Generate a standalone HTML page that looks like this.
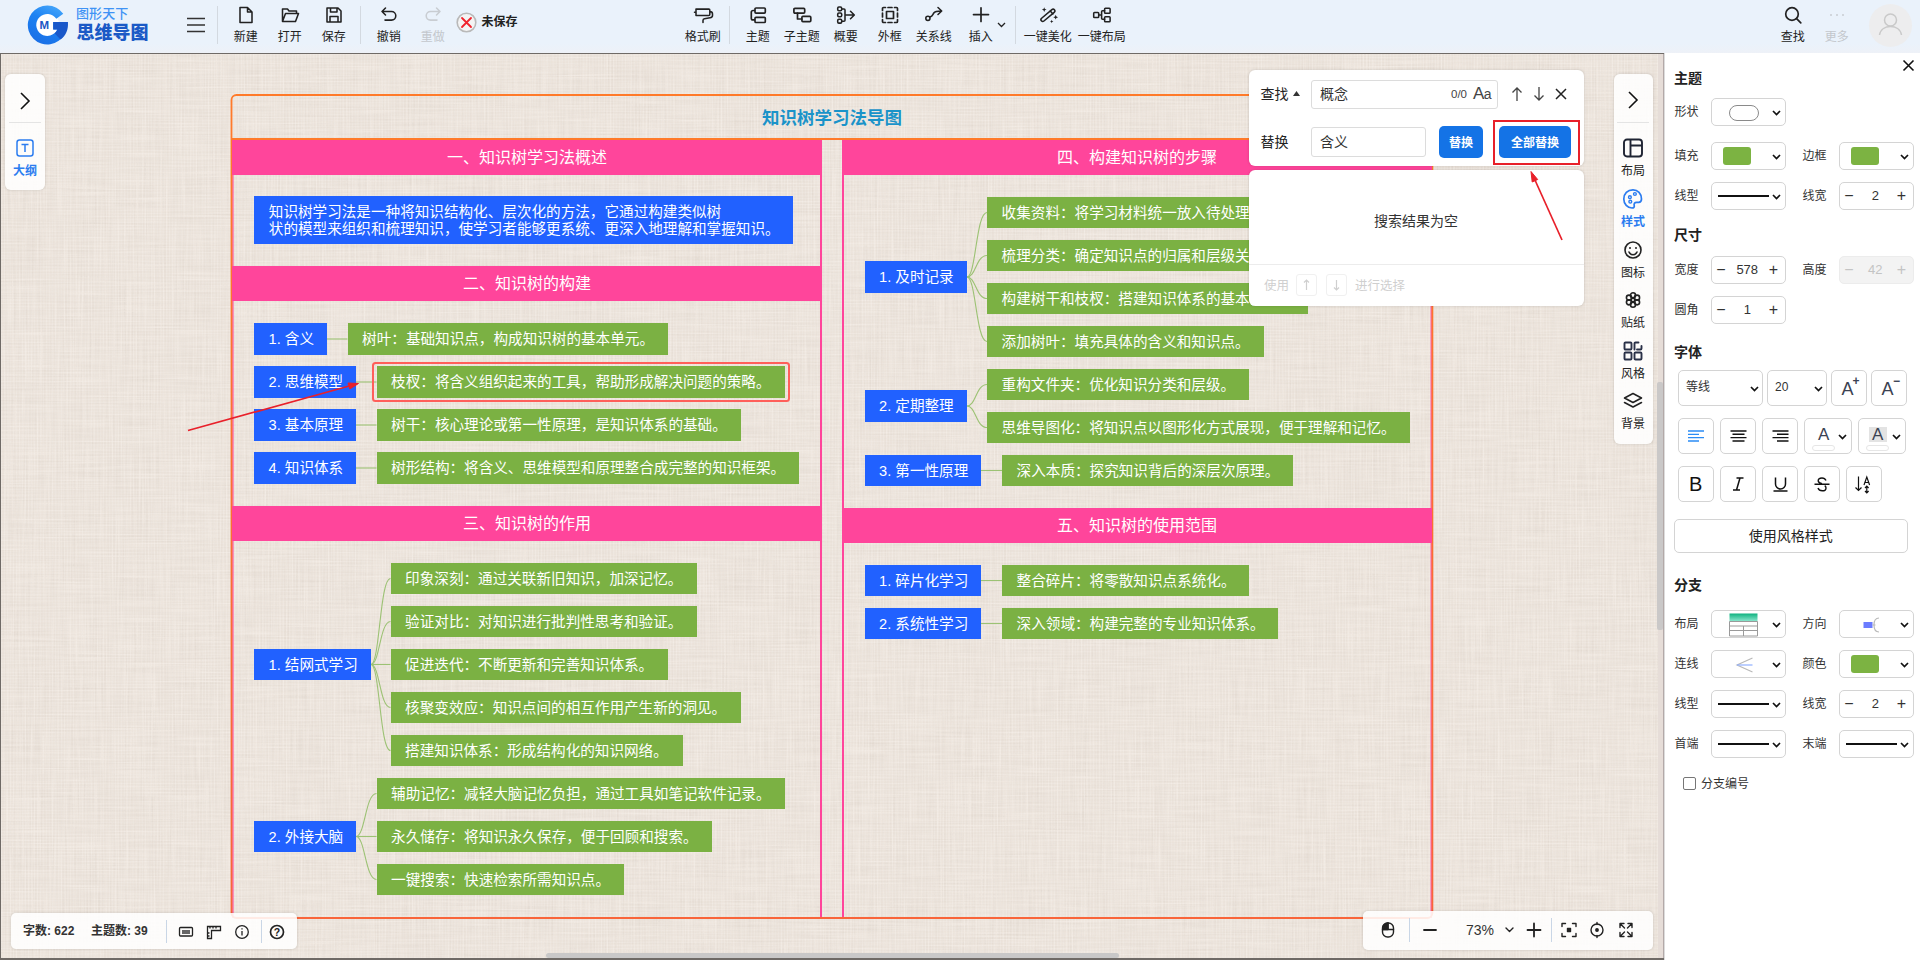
<!DOCTYPE html>
<html lang="zh-CN"><head><meta charset="utf-8"><title>思维导图</title>
<style>
*{box-sizing:border-box;margin:0;padding:0}
html,body{width:1920px;height:960px;overflow:hidden}
body{position:relative;background:#eaf2fb;font-family:"Liberation Sans","Noto Sans CJK SC",sans-serif;color:#222;font-size:12px}
.a{position:absolute}
svg{position:absolute;overflow:visible}
#canvas{position:absolute;left:0;top:53px;width:1664px;height:907px;background-color:#efe7df;border-top:1px solid #6f6a66;border-left:1px solid #6f6a66;border-bottom:2px solid #6f6a66;
background-image:repeating-linear-gradient(0deg,rgba(255,255,255,.10) 0 1px,rgba(0,0,0,0) 1px 3px),repeating-linear-gradient(90deg,rgba(255,255,255,.12) 0 1px,rgba(0,0,0,0) 1px 3px)}
.ti{position:absolute;top:0;height:53px;width:60px;margin-left:-29.200px;text-align:center}
.ti span{position:absolute;left:0;right:0;top:29.300px;font-size:12px;line-height:16px;color:#222;white-space:nowrap}
.ti.dis span{color:#c3c7cc}
.ti svg{left:21px;top:6px;width:18px;height:18px}
.vd{position:absolute;top:6px;height:38px;width:1px;background:#d3d9e0}
.n{position:absolute;height:31.500px;line-height:33px;color:#fff;font-size:14.600px;white-space:nowrap;text-align:left;padding-left:14.600px;font-weight:400;overflow:hidden}
.b{background:#2161ff}
.g{background:#7bb143}
.ph{position:absolute;height:35px;line-height:34px;background:#ff459b;color:#fff;font-size:16px;text-align:center;white-space:nowrap}
.card{position:absolute;background:rgba(255,255,255,.87);border-radius:6px;box-shadow:0 0 3px rgba(0,0,0,.16)}
.sl{position:absolute;font-size:12px;line-height:16px;white-space:nowrap;color:#222;text-align:center;width:40px;margin-left:-20px}
#rp{position:absolute;left:1664px;top:53px;width:256px;height:907px;background:#fff}
.h{position:absolute;left:1674px;font-size:14px;font-weight:700;color:#222;line-height:18px}
.lb{position:absolute;font-size:12px;color:#333;line-height:16px;white-space:nowrap}
.bx{position:absolute;border:1px solid #d4d4d4;border-radius:5px;background:#fff}
.bx.dis{background:#f3f3f3;border-color:#ececec;color:#bbb}
.num{position:absolute;left:0;right:0;text-align:center;font-size:13px;color:#333;top:0;line-height:26px}
.pm{position:absolute;top:0;line-height:25px;font-size:16px;color:#333;width:14px;text-align:center}
.dis .num,.dis .pm{color:#c4c4c4}
</style></head><body>
<div class="a" id="toolbar" style="left:0;top:0;width:1920px;height:53px;background:linear-gradient(180deg,#eaf2fb 0,#eaf2fb 44px,#eef1f7 53px)"></div><svg style="left:26px;top:4px" width="44" height="44" viewBox="0 0 44 44">
<defs><linearGradient id="lg1" x1="0.800" y1="0" x2="0.300" y2="1"><stop offset="0" stop-color="#48a9fb"/><stop offset="0.450" stop-color="#1d82f2"/><stop offset="1" stop-color="#1a6fe6"/></linearGradient></defs>
<circle cx="21.300" cy="21" r="12" fill="#fff"/>
<path d="M37.270 9.820A19.500 19.500 0 1 0 40.800 21L41.800 17.900H27.200V25.500H31.300A11 11 0 1 1 30.310 14.690Z" fill="url(#lg1)"/>
<path d="M27.200 17.900H41.900C42.600 25 40 31.500 34.500 35.500L28.500 29.300C30 28.400 31 27 31.400 25.500H27.200Z" fill="#1a58c9"/>
<text x="13.600" y="25" font-family='"Liberation Sans",sans-serif' font-weight="700" font-size="11.500" fill="#1a56c4">M</text>
</svg><div class="a" style="left:76px;top:6px;font-size:13px;line-height:16px;color:#3f93f5;font-weight:500;letter-spacing:0.100px">图形天下</div><div class="a" style="left:76.500px;top:21.500px;font-size:18px;line-height:22px;color:#1b5ac6;font-weight:900">思维导图</div><svg style="left:187px;top:17px" width="18" height="16" viewBox="0 0 18 16"><path d="M0 1.5H18M0 8H18M0 14.5H18" stroke="#333" stroke-width="1.6" fill="none"/></svg><div class="vd" style="left:217px"></div><div class="vd" style="left:360px"></div><div class="vd" style="left:729px"></div><div class="vd" style="left:1014.5px"></div><div class="ti" style="left:245px"><svg viewBox="0 0 18 18"><path d="M3 1.500h7.500l4.500 4.500v10.500h-12z M10.500 1.500v4.500h4.500" fill="none" stroke="#222" stroke-width="1.55" stroke-linecap="round" stroke-linejoin="round"/></svg><span>新建</span></div><div class="ti" style="left:289px"><svg viewBox="0 0 18 18"><path d="M1.500 15.500v-12.500h5l1.500 2h7.500v2.500 M1.500 15.500l3-8h13l-3 8z" fill="none" stroke="#222" stroke-width="1.55" stroke-linecap="round" stroke-linejoin="round"/></svg><span>打开</span></div><div class="ti" style="left:333px"><svg viewBox="0 0 18 18"><path d="M2 2h11l3 3v11h-14z M5.500 2v4h6.500v-4 M5 16v-5.500h8v5.500" fill="none" stroke="#222" stroke-width="1.55" stroke-linecap="round" stroke-linejoin="round"/></svg><span>保存</span></div><div class="ti" style="left:388px"><svg viewBox="0 0 18 18"><path d="M5.500 2l-3.500 3.500 3.500 3.500 M2 5.500h9.500a4.300 4.300 0 0 1 0 8.600h-6.500" fill="none" stroke="#222" stroke-width="1.55" stroke-linecap="round" stroke-linejoin="round"/></svg><span>撤销</span></div><div class="ti dis" style="left:432px"><svg viewBox="0 0 18 18"><path d="M12.500 2l3.500 3.500-3.500 3.500 M16 5.500h-9.500a4.300 4.300 0 0 0 0 8.600h6.500" fill="none" stroke="#c9cdd2" stroke-width="1.55" stroke-linecap="round" stroke-linejoin="round"/></svg><span>重做</span></div><div class="ti" style="left:702px"><svg viewBox="0 0 18 18"><path d="M2 3.100h12.800a1 1 0 0 1 1 1v4.400a1 1 0 0 1-1 1h-12.800z M0.500 6.300h1.500 M15.800 5.500c2 0 2.700 .8 2.700 2.500v1.500c0 1.500-.8 2-2.500 2.300l-5.500 1c-1 .2-1.500 .8-1.500 1.700v2" fill="none" stroke="#222" stroke-width="1.55" stroke-linecap="round" stroke-linejoin="round"/></svg><span>格式刷</span></div><div class="ti" style="left:757px"><svg viewBox="0 0 18 18"><path d="M7 2h8.300a1 1 0 0 1 1 1v3.100a1 1 0 0 1-1 1h-8.300a1 1 0 0 1-1-1v-3.100a1 1 0 0 1 1-1z M7 11.300h8.300a1 1 0 0 1 1 1v3.200a1 1 0 0 1-1 1h-8.300a1 1 0 0 1-1-1v-3.200a1 1 0 0 1 1-1z M6 4.500h-2a1.700 1.700 0 0 0-1.700 1.700v6a1.700 1.700 0 0 0 1.700 1.700h2" fill="none" stroke="#222" stroke-width="1.700" stroke-linecap="round" stroke-linejoin="round"/></svg><span>主题</span></div><div class="ti" style="left:801px"><svg viewBox="0 0 18 18"><rect x="0.900" y="2.400" width="10.800" height="4.700" rx="1" fill="none" stroke="#222" stroke-width="1.700" stroke-linecap="round" stroke-linejoin="round"/><rect x="8.900" y="10.400" width="8.900" height="5.200" rx="1" fill="none" stroke="#222" stroke-width="1.700" stroke-linecap="round" stroke-linejoin="round"/><path d="M4.500 7.100v5.900h4.400" fill="none" stroke="#222" stroke-width="1.700" stroke-linecap="round" stroke-linejoin="round"/></svg><span>子主题</span></div><div class="ti" style="left:845px"><svg viewBox="0 0 18 18"><rect x="0.700" y="1" width="4" height="3.800" rx="1.200" fill="none" stroke="#222" stroke-width="1.55" stroke-linecap="round" stroke-linejoin="round"/><rect x="0.700" y="7" width="4" height="3.800" rx="1.200" fill="none" stroke="#222" stroke-width="1.55" stroke-linecap="round" stroke-linejoin="round"/><rect x="0.700" y="13.300" width="4" height="3.800" rx="1.200" fill="none" stroke="#222" stroke-width="1.55" stroke-linecap="round" stroke-linejoin="round"/><path d="M4.700 3h2.300a1 1 0 0 1 1 1v10.200a1 1 0 0 1-1 1h-2.300 M8 9h9 M13.500 5.200l3.800 3.800-3.800 3.800" fill="none" stroke="#222" stroke-width="1.55" stroke-linecap="round" stroke-linejoin="round"/></svg><span>概要</span></div><div class="ti" style="left:889px"><svg viewBox="0 0 18 18"><path d="M1.500 4.500v-2a1 1 0 0 1 1-1h2 M7 1.500h4 M13.500 1.500h2a1 1 0 0 1 1 1v2 M16.500 7v4 M16.500 13.500v2a1 1 0 0 1-1 1h-2 M11 16.500h-4 M4.500 16.500h-2a1 1 0 0 1-1-1v-2 M1.500 11v-4 M5.500 5.500h7v7h-7z" fill="none" stroke="#222" stroke-width="1.700" stroke-linecap="round" stroke-linejoin="round"/></svg><span>外框</span></div><div class="ti" style="left:933px"><svg viewBox="0 0 18 18"><path d="M5 11c2.500-.8 2.500-2 3.800-4 1.200-1.800 3-2 7.500-2 M13 1.500l3.700 3.500-3.700 3.500" fill="none" stroke="#222" stroke-width="1.55" stroke-linecap="round" stroke-linejoin="round"/><circle cx="2.900" cy="12.300" r="2.100" fill="none" stroke="#222" stroke-width="1.55" stroke-linecap="round" stroke-linejoin="round"/></svg><span>关系线</span></div><div class="ti" style="left:980px"><svg viewBox="0 0 18 18"><path d="M9 1.800v13.700 M1.500 8.600h15" fill="none" stroke="#222" stroke-width="1.700" stroke-linecap="round" stroke-linejoin="round"/></svg><span>插入</span></div><div class="ti" style="left:1047px"><svg viewBox="0 0 18 18"><rect x="0.400" y="7.500" width="17" height="3.600" rx="1.800" transform="rotate(-40 8.900 9.300)" fill="none" stroke="#222" stroke-width="1.55" stroke-linecap="round" stroke-linejoin="round"/><path d="M11.300 5l2.600 2.900" fill="none" stroke="#222" stroke-width="1.55" stroke-linecap="round" stroke-linejoin="round"/><path d="M5.200 1.200l.7 1.700 1.700.7-1.700.7-.7 1.700-.7-1.700-1.700-.7 1.700-.7z M16.700 8.800l.7 1.700 1.700.7-1.700.7-.7 1.700-.7-1.700-1.700-.7 1.700-.7z M12.700 13.800l.5 1.200 1.200.5-1.200.5-.5 1.200-.5-1.200-1.200-.5 1.200-.5z" fill="#222"/></svg><span>一键美化</span></div><div class="ti" style="left:1101px"><svg viewBox="0 0 18 18"><rect x="0.700" y="6.500" width="5" height="5" rx=".8" fill="none" stroke="#222" stroke-width="1.55" stroke-linecap="round" stroke-linejoin="round"/><rect x="11.600" y="2.300" width="5.500" height="5" rx=".8" fill="none" stroke="#222" stroke-width="1.55" stroke-linecap="round" stroke-linejoin="round"/><rect x="11.600" y="10.700" width="5.500" height="5" rx=".8" fill="none" stroke="#222" stroke-width="1.55" stroke-linecap="round" stroke-linejoin="round"/><path d="M5.700 9h2.900 M11.600 4.800h-2a1 1 0 0 0-1 1v6.400a1 1 0 0 0 1 1h2" fill="none" stroke="#222" stroke-width="1.55" stroke-linecap="round" stroke-linejoin="round"/></svg><span>一键布局</span></div><div class="ti" style="left:1792px"><svg viewBox="0 0 18 18"><circle cx="8" cy="8" r="6.300" fill="none" stroke="#222" stroke-width="1.700" stroke-linecap="round" stroke-linejoin="round"/><path d="M12.600 12.600l4.200 4.200" fill="none" stroke="#222" stroke-width="1.700" stroke-linecap="round" stroke-linejoin="round"/></svg><span>查找</span></div><svg style="left:996.500px;top:21.500px" width="9" height="6" viewBox="0 0 9 6"><path d="M1 1l3.5 3.5L8 1" fill="none" stroke="#222" stroke-width="1.3"/></svg><div class="ti dis" style="left:1836px"><svg viewBox="0 0 18 18"><circle cx="3" cy="9" r="1" fill="#c9cdd2"/><circle cx="9" cy="9" r="1" fill="#c9cdd2"/><circle cx="15" cy="9" r="1" fill="#c9cdd2"/></svg><span>更多</span></div><svg style="left:455.500px;top:12.200px" width="21" height="21" viewBox="0 0 21 21"><circle cx="10.500" cy="10.500" r="9.300" fill="#f4f4f4" stroke="#b9b9b9" stroke-width="1.600"/><path d="M6 6l9 9M15 6l-9 9" stroke="#f0232d" stroke-width="1.800" stroke-linecap="round"/></svg><div class="a" style="left:481.500px;top:14.300px;font-size:12px;line-height:16px;font-weight:700;color:#222">未保存</div><svg style="left:1869px;top:4px" width="43" height="43" viewBox="0 0 43 43"><circle cx="21.500" cy="21.500" r="21.500" fill="#ededee"/><circle cx="21.500" cy="16" r="6" fill="none" stroke="#c9c9c9" stroke-width="1.500"/><path d="M10.500 31c1-6 6-8.500 11-8.500s10 2.500 11 8.500" fill="none" stroke="#c9c9c9" stroke-width="1.500"/></svg><div id="canvas"></div><svg style="left:1px;top:54px" width="1662" height="904"><defs><filter id="lin" x="0" y="0" width="100%" height="100%"><feTurbulence type="fractalNoise" baseFrequency="0.018 0.55" numOctaves="2" seed="3" result="h"/><feTurbulence type="fractalNoise" baseFrequency="0.55 0.018" numOctaves="2" seed="8" result="v"/><feBlend in="h" in2="v" mode="multiply" result="m"/><feColorMatrix in="m" type="matrix" values="0 0 0 0 0.47  0 0 0 0 0.40  0 0 0 0 0.34  1.1 1.1 1.1 0 -1.05"/></filter></defs><rect width="1662" height="904" filter="url(#lin)" opacity="0.2"/></svg><div class="a" style="left:1657.500px;top:54px;width:6px;height:904px;background:#e6ddd8"></div><div class="a" style="left:1656.500px;top:382px;width:6.500px;height:248px;background:#cac8c8;border-radius:2px"></div><div class="a" style="left:1663.200px;top:54px;width:1.500px;height:904px;background:#b3a9a8"></div><div class="a" style="left:546px;top:953px;width:573px;height:5px;background:#c9c8c8;border-radius:3px"></div><svg style="left:0;top:0" width="1664" height="960" viewBox="0 0 1664 960">
<defs><linearGradient id="fg" x1="0" y1="0" x2="0" y2="1"><stop offset="0" stop-color="#ff7a2a"/><stop offset="1" stop-color="#f9653a"/></linearGradient></defs>

<path d="M821 140V918 M843 140V918" stroke="#ff459b" stroke-width="2" fill="none"/>
<path d="M232.900 140V918 M1431.200 140V918" stroke="#ff459b" stroke-width="1.200" fill="none"/>
<path d="M231 139H1433" stroke="#ff7a2a" stroke-width="2"/>
<rect x="231.500" y="95" width="1200.900" height="823" rx="5" fill="none" stroke="url(#fg)" stroke-width="1.800"/>
<path d="M327 339H347.5" stroke="#9cc274" stroke-width="1.100" fill="none"/><path d="M356 382H376.5" stroke="#9cc274" stroke-width="1.100" fill="none"/><path d="M356 425H376.5" stroke="#9cc274" stroke-width="1.100" fill="none"/><path d="M356 468H376.5" stroke="#9cc274" stroke-width="1.100" fill="none"/><path d="M371 664.5 C379.775 664.5 379.775 578.5 390.5 578.5" stroke="#9cc274" stroke-width="1.100" fill="none"/><path d="M371 664.5 C379.775 664.5 379.775 621.5 390.5 621.5" stroke="#9cc274" stroke-width="1.100" fill="none"/><path d="M371 664.5H390.5" stroke="#9cc274" stroke-width="1.100" fill="none"/><path d="M371 664.5 C379.775 664.5 379.775 707.5 390.5 707.5" stroke="#9cc274" stroke-width="1.100" fill="none"/><path d="M371 664.5 C379.775 664.5 379.775 750.5 390.5 750.5" stroke="#9cc274" stroke-width="1.100" fill="none"/><path d="M356 836.5 C365.225 836.5 365.225 793.5 376.5 793.5" stroke="#9cc274" stroke-width="1.100" fill="none"/><path d="M356 836.5H376.5" stroke="#9cc274" stroke-width="1.100" fill="none"/><path d="M356 836.5 C365.225 836.5 365.225 879.5 376.5 879.5" stroke="#9cc274" stroke-width="1.100" fill="none"/><path d="M967 277 C976 277 976 212.5 987 212.5" stroke="#9cc274" stroke-width="1.100" fill="none"/><path d="M967 277 C976 277 976 255.5 987 255.5" stroke="#9cc274" stroke-width="1.100" fill="none"/><path d="M967 277 C976 277 976 298.5 987 298.5" stroke="#9cc274" stroke-width="1.100" fill="none"/><path d="M967 277 C976 277 976 341.5 987 341.5" stroke="#9cc274" stroke-width="1.100" fill="none"/><path d="M967 406 C976 406 976 384.5 987 384.5" stroke="#9cc274" stroke-width="1.100" fill="none"/><path d="M967 406 C976 406 976 427.5 987 427.5" stroke="#9cc274" stroke-width="1.100" fill="none"/><path d="M981 470.5H1002" stroke="#9cc274" stroke-width="1.100" fill="none"/><path d="M981 580.5H1002" stroke="#9cc274" stroke-width="1.100" fill="none"/><path d="M981 623.5H1002" stroke="#9cc274" stroke-width="1.100" fill="none"/></svg><div class="a" style="left:232px;top:106.600px;width:1200px;text-align:center;font-size:17.500px;line-height:22px;font-weight:700;color:#1a93c9">知识树学习法导图</div><div class="ph" style="left:232px;top:140px;width:590px;height:35px;line-height:35px">一、知识树学习法概述</div><div class="ph" style="left:232px;top:265.5px;width:590px;height:35.5px;line-height:35.5px">二、知识树的构建</div><div class="ph" style="left:232px;top:505.5px;width:590px;height:35px;line-height:35px">三、知识树的作用</div><div class="ph" style="left:842px;top:140px;width:590px;height:35px;line-height:35px">四、构建知识树的步骤</div><div class="ph" style="left:842px;top:507.5px;width:590px;height:35px;line-height:35px">五、知识树的使用范围</div><div class="a b" style="left:254.200px;top:196px;width:538.800px;height:47.500px;color:#fff;font-size:14.6px;line-height:17px;padding:7.600px 0 0 14.600px;white-space:nowrap">知识树学习法是一种将知识结构化、层次化的方法，它通过构建类似树<br>状的模型来组织和梳理知识，使学习者能够更系统、更深入地理解和掌握知识。</div><div class="n b" style="left:254px;top:323px;width:73px">1. 含义</div><div class="n g" style="left:347.5px;top:323px;width:320.5px">树叶：基础知识点，构成知识树的基本单元。</div><div class="n b" style="left:254px;top:366px;width:102px">2. 思维模型</div><div class="n g" style="left:376.5px;top:366px;width:408.5px">枝杈：将含义组织起来的工具，帮助形成解决问题的策略。</div><div class="n b" style="left:254px;top:409px;width:102px">3. 基本原理</div><div class="n g" style="left:376.5px;top:409px;width:364.5px">树干：核心理论或第一性原理，是知识体系的基础。</div><div class="n b" style="left:254px;top:452px;width:102px">4. 知识体系</div><div class="n g" style="left:376.5px;top:452px;width:422.5px">树形结构：将含义、思维模型和原理整合成完整的知识框架。</div><div class="n b" style="left:254px;top:648.5px;width:117px">1. 结网式学习</div><div class="n g" style="left:390.5px;top:562.5px;width:306.5px">印象深刻：通过关联新旧知识，加深记忆。</div><div class="n g" style="left:390.5px;top:605.5px;width:306.5px">验证对比：对知识进行批判性思考和验证。</div><div class="n g" style="left:390.5px;top:648.5px;width:277px">促进迭代：不断更新和完善知识体系。</div><div class="n g" style="left:390.5px;top:691.5px;width:350.5px">核聚变效应：知识点间的相互作用产生新的洞见。</div><div class="n g" style="left:390.5px;top:734.5px;width:292px">搭建知识体系：形成结构化的知识网络。</div><div class="n b" style="left:254px;top:820.5px;width:102px">2. 外接大脑</div><div class="n g" style="left:376.5px;top:777.5px;width:408px">辅助记忆：减轻大脑记忆负担，通过工具如笔记软件记录。</div><div class="n g" style="left:376.5px;top:820.5px;width:335.5px">永久储存：将知识永久保存，便于回顾和搜索。</div><div class="n g" style="left:376.5px;top:863.5px;width:247.5px">一键搜索：快速检索所需知识点。</div><div class="n b" style="left:864.5px;top:261px;width:102.5px">1. 及时记录</div><div class="n g" style="left:987px;top:196.5px;width:321px">收集资料：将学习材料统一放入待处理文件夹。</div><div class="n g" style="left:987px;top:239.5px;width:321px">梳理分类：确定知识点的归属和层级关系。</div><div class="n g" style="left:987px;top:282.5px;width:321px">构建树干和枝杈：搭建知识体系的基本框架。</div><div class="n g" style="left:987px;top:325.5px;width:277px">添加树叶：填充具体的含义和知识点。</div><div class="n b" style="left:864.5px;top:390px;width:102.5px">2. 定期整理</div><div class="n g" style="left:987px;top:368.5px;width:262px">重构文件夹：优化知识分类和层级。</div><div class="n g" style="left:987px;top:411.5px;width:423px">思维导图化：将知识点以图形化方式展现，便于理解和记忆。</div><div class="n b" style="left:864.5px;top:454.5px;width:116.5px">3. 第一性原理</div><div class="n g" style="left:1002px;top:454.5px;width:291px">深入本质：探究知识背后的深层次原理。</div><div class="n b" style="left:864.5px;top:564.5px;width:116.5px">1. 碎片化学习</div><div class="n g" style="left:1002px;top:564.5px;width:247px">整合碎片：将零散知识点系统化。</div><div class="n b" style="left:864.5px;top:607.5px;width:116.5px">2. 系统性学习</div><div class="n g" style="left:1002px;top:607.5px;width:276px">深入领域：构建完整的专业知识体系。</div><div class="a" style="left:372px;top:361.500px;width:417.500px;height:40.500px;border:2px solid #ff5f5a;border-radius:3.500px"></div><svg style="left:0;top:0" width="1664" height="960"><path d="M188 430.500L351 385.500" stroke="#e8202a" stroke-width="1.700"/><path d="M358.500 383.500l-10.500-.5 1.800 6z" fill="#e8202a" stroke="#e8202a" stroke-width="1"/></svg><div class="card" style="left:5px;top:74px;width:40px;height:116px"></div><svg style="left:19px;top:92px" width="12" height="18" viewBox="0 0 12 18"><path d="M2 1l8 8-8 8" fill="none" stroke="#111" stroke-width="1.600"/></svg><div class="a" style="left:9px;top:122px;width:32px;height:1px;background:#e4e4e4"></div><svg style="left:16px;top:139px" width="18" height="18" viewBox="0 0 18 18"><rect x="1" y="1" width="16" height="16" rx="2.500" fill="none" stroke="#2b7cf0" stroke-width="1.500"/><path d="M5.500 5.500h7M9 5.500v7.500" stroke="#2b7cf0" stroke-width="1.500" fill="none"/></svg><div class="sl" style="left:25px;top:163.300px;color:#2b7cf0;font-weight:700">大纲</div><div class="card" style="left:1613.500px;top:73.500px;width:39.500px;height:370.500px"></div><svg style="left:1627px;top:91px" width="12" height="18" viewBox="0 0 12 18"><path d="M2 1l8 8-8 8" fill="none" stroke="#111" stroke-width="1.600"/></svg><div class="a" style="left:1617px;top:122px;width:32px;height:1px;background:#e4e4e4"></div><svg style="left:1623px;top:138px" width="20" height="20" viewBox="0 0 20 20"><path d="M4 1.500h12a3 3 0 0 1 3 3v11a3 3 0 0 1-3 3h-12a3 3 0 0 1-3-3v-11a3 3 0 0 1 3-3z M7.500 1.500v17 M7.500 7.500h11.500" fill="none" stroke="#1f2433" stroke-width="1.900" stroke-linecap="round" stroke-linejoin="round"/></svg><div class="sl" style="left:1633px;top:163.3px;">布局</div><svg style="left:1623px;top:189px" width="20" height="20" viewBox="0 0 20 20"><path d="M10 .8C4.500 .8 .8 4.800 .8 10s3.700 9 8.200 9c1.800 0 2.600-1 2.200-2.400-.5-1.700 .4-3.300 2.300-3.300h2.200c1.800 0 2.800-1.300 2.800-3.300C18.500 4.800 14.800 .8 10 .8z" fill="none" stroke="#2b7cf0" stroke-width="1.700" stroke-linecap="round" stroke-linejoin="round"/><circle cx="6.900" cy="8.200" r="1.400" fill="none" stroke="#2b7cf0" stroke-width="1.4" stroke-linecap="round" stroke-linejoin="round"/><circle cx="11.900" cy="5" r="1.400" fill="none" stroke="#2b7cf0" stroke-width="1.4" stroke-linecap="round" stroke-linejoin="round"/><circle cx="7.300" cy="12.700" r="1.400" fill="none" stroke="#2b7cf0" stroke-width="1.4" stroke-linecap="round" stroke-linejoin="round"/></svg><div class="sl" style="left:1633px;top:214.3px;color:#2b7cf0;font-weight:700">样式</div><svg style="left:1623px;top:240px" width="20" height="20" viewBox="0 0 20 20"><circle cx="10" cy="10" r="8" fill="none" stroke="#222" stroke-width="1.600" stroke-linecap="round" stroke-linejoin="round"/><circle cx="7" cy="8" r="1" fill="#222"/><circle cx="13" cy="8" r="1" fill="#222"/><path d="M6 12c1 2 2.500 2.800 4 2.800s3-.8 4-2.800" fill="none" stroke="#222" stroke-width="1.600" stroke-linecap="round" stroke-linejoin="round"/></svg><div class="sl" style="left:1633px;top:265.3px;">图标</div><svg style="left:1623px;top:290px" width="20" height="20" viewBox="0 0 20 20"><g transform="translate(1 1) scale(.9)" fill="none" stroke="#222" stroke-width="1.800" stroke-linecap="round" stroke-linejoin="round"><circle cx="10" cy="10" r="2"/><circle cx="10" cy="4.800" r="2.800"/><circle cx="10" cy="15.200" r="2.800"/><circle cx="5.500" cy="7.400" r="2.800"/><circle cx="14.500" cy="7.400" r="2.800"/><circle cx="5.500" cy="12.600" r="2.800"/><circle cx="14.500" cy="12.600" r="2.800"/></g></svg><div class="sl" style="left:1633px;top:315.3px;">贴纸</div><svg style="left:1623px;top:341px" width="20" height="20" viewBox="0 0 20 20"><g fill="none" stroke="#2a3148" stroke-width="1.900" stroke-linecap="round" stroke-linejoin="round"><rect x="1.500" y="1.500" width="7" height="7" rx="1"/><rect x="1.500" y="11.500" width="7" height="7" rx="1"/><rect x="11.500" y="11.500" width="7" height="7" rx="1"/><path d="M11.500 8.500v-6a1 1 0 0 1 1-1h3 M18.500 5v2.500a1 1 0 0 1-1 1h-3.500"/></g></svg><div class="sl" style="left:1633px;top:366.3px;">风格</div><svg style="left:1623px;top:391px" width="20" height="20" viewBox="0 0 20 20"><g fill="none" stroke="#222" stroke-width="1.600" stroke-linecap="round" stroke-linejoin="round"><path d="M10 2.500l8.500 4.500-8.500 4.500-8.500-4.500z"/><path d="M1.500 11.500l8.500 4.500 8.500-4.500"/></g></svg><div class="sl" style="left:1633px;top:416.3px;">背景</div><div class="card" style="left:1248.500px;top:69.500px;width:335px;height:96.500px;background:#fff"></div><div class="card" style="left:1248.500px;top:169.500px;width:335px;height:136.500px;background:#fff"></div><div class="a" style="left:1260.500px;top:85px;font-size:14px;line-height:18px;color:#222">查找</div><svg style="left:1293px;top:91px" width="7" height="5" viewBox="0 0 7 5"><path d="M0 5L3.500 0 7 5z" fill="#333"/></svg><div class="bx" style="left:1310.500px;top:79.500px;width:187px;height:29.500px;border-color:#dcdcdc;border-radius:3px"></div><div class="a" style="left:1320px;top:85px;font-size:14px;line-height:18px;color:#333">概念</div><div class="a" style="left:1451px;top:87px;font-size:11.500px;line-height:14px;color:#444">0/0</div><div class="a" style="left:1473px;top:84px;font-size:17px;line-height:20px;color:#444;letter-spacing:-0.500px">A<span style="font-size:14px">a</span></div><svg style="left:1511px;top:86px" width="60" height="16" viewBox="0 0 60 16"><g fill="none" stroke="#444" stroke-width="1.300"><path d="M6 15V2M1.500 6.500L6 2l4.500 4.500"/><path d="M28 1v13M23.500 9.500L28 14l4.500-4.500"/><path d="M45 3l10 10M55 3l-10 10" stroke="#222" stroke-width="1.500"/></g></svg><div class="a" style="left:1260.500px;top:133px;font-size:14px;line-height:18px;color:#222">替换</div><div class="bx" style="left:1310.500px;top:127px;width:115px;height:29.500px;border-color:#dcdcdc;border-radius:3px"></div><div class="a" style="left:1320px;top:133px;font-size:14px;line-height:18px;color:#333">含义</div><div class="a" style="left:1439px;top:126px;width:44px;height:31.500px;background:#1473e6;border-radius:5px;color:#fff;font-size:12px;font-weight:700;line-height:35.500px;text-align:center">替换</div><div class="a" style="left:1499px;top:126px;width:72px;height:31.500px;background:#1473e6;border-radius:5px;color:#fff;font-size:12px;font-weight:700;line-height:35.500px;text-align:center">全部替换</div><div class="a" style="left:1493px;top:120px;width:87px;height:44.500px;border:2px solid #e8202a"></div><svg style="left:0;top:0" width="1664" height="960"><path d="M1562 240L1534.500 179" stroke="#e8202a" stroke-width="1.700"/><path d="M1531 171.500l1.200 10.500 5.500-2.500z" fill="#e8202a" stroke="#e8202a" stroke-width="1"/></svg><div class="a" style="left:1248.500px;top:212px;width:335px;text-align:center;font-size:14px;line-height:18px;color:#333">搜索结果为空</div><div class="a" style="left:1248.500px;top:264px;width:335px;height:1px;background:#ececec"></div><div class="a" style="left:1264px;top:278px;font-size:12.500px;line-height:16px;color:#cfcfcf">使用</div><div class="bx" style="left:1296px;top:274px;width:21px;height:22px;border-color:#f0f0f0;border-radius:3px"></div><div class="bx" style="left:1326px;top:274px;width:21px;height:22px;border-color:#f0f0f0;border-radius:3px"></div><svg style="left:1296px;top:274px" width="51" height="22" viewBox="0 0 51 22"><g fill="none" stroke="#cfcfcf" stroke-width="1.200"><path d="M10.500 16V6M8 8.500l2.500-2.500 2.500 2.500"/><path d="M40.500 6v10M38 13.500l2.500 2.500 2.500-2.500"/></g></svg><div class="a" style="left:1355px;top:278px;font-size:12.500px;line-height:16px;color:#cfcfcf">进行选择</div><div class="card" style="left:11px;top:913px;width:286px;height:35.500px;border-radius:5px"></div><div class="a" style="left:23px;top:923px;font-size:12px;line-height:16px;font-weight:700;color:#333;white-space:nowrap">字数: 622</div><div class="a" style="left:91px;top:923px;font-size:12px;line-height:16px;font-weight:700;color:#333;white-space:nowrap">主题数: 39</div><div class="a" style="left:166px;top:920px;width:1px;height:23px;background:#c9d6e6"></div><div class="a" style="left:261px;top:920px;width:1px;height:23px;background:#c9d6e6"></div><svg style="left:178px;top:923px" width="110" height="18" viewBox="0 0 110 18"><g fill="none" stroke="#222" stroke-width="1.300"><rect x="1.500" y="4.500" width="13" height="8.500" rx="1"/><rect x="4" y="7" width="8" height="4" fill="#666" stroke="none"/><path d="M29.500 3.500h13v4h-9v8h-4z M32 3.500v2M35 3.500v2M38 3.500v2M29.500 10h2M29.500 13h2"/><circle cx="64" cy="9" r="6.300"/><path d="M64 8v4.500M64 5.300v1.200"/><circle cx="99" cy="9" r="6.500" stroke-width="1.700"/></g><text x="99" y="13" text-anchor="middle" font-family="Liberation Sans,sans-serif" font-weight="700" font-size="10.500" fill="#222">?</text></svg><div class="card" style="left:1363px;top:910.500px;width:290px;height:39px;border-radius:5px"></div><div class="a" style="left:1408.500px;top:918px;width:1px;height:24px;background:#c9d6e6"></div><div class="a" style="left:1550.500px;top:918px;width:1px;height:24px;background:#c9d6e6"></div><svg style="left:1380px;top:921px" width="260" height="18" viewBox="0 0 260 18"><g fill="none" stroke="#222" stroke-width="1.400" stroke-linecap="round" stroke-linejoin="round"><rect x="2.500" y="2" width="11" height="14" rx="5"/><path d="M2.500 8.500h11M8 2v6.500"/><path d="M3 8.500V7a5 5 0 0 1 5-5v6.500z" fill="#222"/><path d="M44 9h12" stroke-width="1.800"/><path d="M126 7l3.500 3.500 3.500-3.500"/><path d="M147.500 9h13M154 2.500v13" stroke-width="1.800"/><path d="M182 5.500v-3h3.500 M192.500 2.500h3.500v3 M196 12.500v3h-3.500 M185.500 15.500h-3.500v-3"/><rect x="187.500" y="7.500" width="3" height="3" fill="#222"/><circle cx="217" cy="9" r="6"/><circle cx="217" cy="9" r="1.200" fill="#222"/><path d="M217 1.500v2M217 14.500v2"/><path d="M240 2.500h4M240 2.500v4M240 2.500l4.500 4.500 M252 2.500h-4M252 2.500v4M252 2.500l-4.500 4.500 M240 15.500h4M240 15.500v-4M240 15.500l4.500-4.500 M252 15.500h-4M252 15.500v-4M252 15.500l-4.500-4.500"/></g></svg><div class="a" style="left:1462px;top:921px;width:36px;text-align:center;font-size:14px;line-height:18px;color:#333">73%</div><div id="rp"></div><div class="a" style="left:1664px;top:53px;width:1px;height:907px;background:#dcdcdc"></div><svg style="left:1903px;top:60px" width="11" height="11" viewBox="0 0 11 11"><path d="M0.500 0.500l10 10M10.500 0.500l-10 10" stroke="#111" stroke-width="1.600"/></svg><div class="h" style="top:69px">主题</div><div class="lb" style="left:1674.5px;top:104px">形状</div><div class="bx " style="left:1711px;top:98px;width:74.5px;height:28px"><div class="a" style="left:17px;top:5.500px;width:29.500px;height:16.500px;border:1.400px solid #8a8a8a;border-radius:8.500px"></div></div><svg style="left:1772px;top:110px" width="9" height="6" viewBox="0 0 9 6"><path d="M1 1l3.500 3.500L8 1" fill="none" stroke="#111" stroke-width="1.700"/></svg><div class="lb" style="left:1674.5px;top:147.5px">填充</div><div class="bx " style="left:1711px;top:141.5px;width:74.5px;height:28px"><div class="a" style="left:10.500px;top:4px;width:28px;height:18px;border-radius:3px;background:#7cb342"></div></div><svg style="left:1772px;top:153.5px" width="9" height="6" viewBox="0 0 9 6"><path d="M1 1l3.500 3.500L8 1" fill="none" stroke="#111" stroke-width="1.700"/></svg><div class="lb" style="left:1802.5px;top:147.5px">边框</div><div class="bx " style="left:1839px;top:141.5px;width:74.5px;height:28px"><div class="a" style="left:10.500px;top:4px;width:28px;height:18px;border-radius:3px;background:#7cb342"></div></div><svg style="left:1900px;top:153.5px" width="9" height="6" viewBox="0 0 9 6"><path d="M1 1l3.500 3.500L8 1" fill="none" stroke="#111" stroke-width="1.700"/></svg><div class="lb" style="left:1674.5px;top:187.5px">线型</div><div class="bx " style="left:1711px;top:181.5px;width:74.5px;height:28px"><div class="a" style="left:6px;top:12px;width:51px;height:2px;background:#111"></div></div><svg style="left:1772px;top:193.5px" width="9" height="6" viewBox="0 0 9 6"><path d="M1 1l3.500 3.500L8 1" fill="none" stroke="#111" stroke-width="1.700"/></svg><div class="lb" style="left:1802.5px;top:187.5px">线宽</div><div class="bx " style="left:1839px;top:181.5px;width:74.5px;height:28px"><span class="pm" style="left:2px">−</span><span class="num" style="left:-2px">2</span><span class="pm" style="right:4px">+</span></div><div class="h" style="top:226px">尺寸</div><div class="lb" style="left:1674.5px;top:261.5px">宽度</div><div class="bx " style="left:1711px;top:255.5px;width:74.5px;height:28px"><span class="pm" style="left:2px">−</span><span class="num" style="left:-2px">578</span><span class="pm" style="right:4px">+</span></div><div class="lb" style="left:1802.5px;top:261.5px">高度</div><div class="bx dis" style="left:1839px;top:255.5px;width:74.5px;height:28px"><span class="pm" style="left:2px">−</span><span class="num" style="left:-2px">42</span><span class="pm" style="right:4px">+</span></div><div class="lb" style="left:1674.5px;top:301.5px">圆角</div><div class="bx " style="left:1711px;top:295.5px;width:74.5px;height:28px"><span class="pm" style="left:2px">−</span><span class="num" style="left:-2px">1</span><span class="pm" style="right:4px">+</span></div><div class="h" style="top:343px">字体</div><div class="bx " style="left:1678px;top:370.25px;width:84.5px;height:35.5px"><span class="a" style="left:7px;top:8px;font-size:12px;line-height:16px;color:#333">等线</span></div><svg style="left:1749.5px;top:386px" width="9" height="6" viewBox="0 0 9 6"><path d="M1 1l3.500 3.500L8 1" fill="none" stroke="#111" stroke-width="1.700"/></svg><div class="bx " style="left:1767px;top:370.25px;width:59.5px;height:35.5px"><span class="a" style="left:7px;top:8px;font-size:12px;line-height:16px;color:#333">20</span></div><svg style="left:1813.5px;top:386px" width="9" height="6" viewBox="0 0 9 6"><path d="M1 1l3.500 3.500L8 1" fill="none" stroke="#111" stroke-width="1.700"/></svg><div class="bx " style="left:1831px;top:370.25px;width:35.5px;height:35.5px"><span class="a" style="left:9.500px;top:8px;font-size:18px;line-height:20px;color:#3b4252">A</span><span class="a" style="left:20.500px;top:4px;font-size:12px;line-height:12px;font-weight:700;color:#3b4252">+</span></div><div class="bx " style="left:1871px;top:370.25px;width:35.5px;height:35.5px"><span class="a" style="left:9.500px;top:8px;font-size:18px;line-height:20px;color:#3b4252">A</span><span class="a" style="left:21px;top:4px;font-size:12px;line-height:12px;font-weight:700;color:#3b4252">−</span></div><div class="bx " style="left:1678px;top:418.25px;width:35.5px;height:35.5px"><svg style="left:9px;top:11px" width="17" height="12" viewBox="0 0 17 12"><path d="M0 1h16M0 4.300h11M0 7.600h16M0 11h11" stroke="#2b8cf5" stroke-width="1.300" fill="none"/></svg></div><div class="bx " style="left:1720px;top:418.25px;width:35.5px;height:35.5px"><svg style="left:9px;top:11px" width="17" height="12" viewBox="0 0 17 12"><path d="M0.500 1h16M2.500 4.300h12M0.500 7.600h16M2.500 11h12" stroke="#111" stroke-width="1.400" fill="none"/></svg></div><div class="bx " style="left:1762px;top:418.25px;width:35.5px;height:35.5px"><svg style="left:9px;top:11px" width="17" height="12" viewBox="0 0 17 12"><path d="M0.500 1h16M5 4.300h11.500M0.500 7.600h16M5 11h11.500" stroke="#111" stroke-width="1.400" fill="none"/></svg></div><div class="bx " style="left:1804px;top:418.25px;width:47.5px;height:35.5px"><span class="a" style="left:13px;top:6px;font-size:17px;line-height:20px;color:#3b4252">A</span><span class="a" style="left:7px;top:26px;width:23px;height:6px;border:1px solid #e6e6e6;border-radius:3px;background:#fff"></span></div><svg style="left:1838px;top:433.5px" width="9" height="6" viewBox="0 0 9 6"><path d="M1 1l3.500 3.500L8 1" fill="none" stroke="#111" stroke-width="1.700"/></svg><div class="bx " style="left:1858px;top:418.25px;width:47.5px;height:35.5px"><span class="a" style="left:10px;top:8px;width:18px;height:15px;background:#e3e3e3"></span><span class="a" style="left:13px;top:6px;font-size:17px;line-height:20px;color:#3b4252">A</span><span class="a" style="left:7px;top:26px;width:23px;height:6px;border:1px solid #e6e6e6;border-radius:3px;background:#fff"></span></div><svg style="left:1892px;top:433.5px" width="9" height="6" viewBox="0 0 9 6"><path d="M1 1l3.500 3.500L8 1" fill="none" stroke="#111" stroke-width="1.700"/></svg><div class="bx " style="left:1678px;top:466.25px;width:35.5px;height:35.5px"><span class="a" style="left:0;width:33.500px;text-align:center;top:6px;font-size:20px;line-height:22px;color:#111">B</span></div><div class="bx " style="left:1720px;top:466.25px;width:35.5px;height:35.5px"><svg style="left:11px;top:10px" width="13" height="14" viewBox="0 0 13 14"><path d="M4.500 1h7M1 13h7M8 1L4.500 13" stroke="#111" stroke-width="1.500" fill="none"/></svg></div><div class="bx " style="left:1762px;top:466.25px;width:35.5px;height:35.5px"><svg style="left:10px;top:10px" width="15" height="15" viewBox="0 0 15 15"><path d="M2.500 0.500v6.500a5 5 0 0 0 10 0v-6.500M0.500 14h14" stroke="#111" stroke-width="1.500" fill="none"/></svg></div><div class="bx " style="left:1804px;top:466.25px;width:35.5px;height:35.5px"><svg style="left:9px;top:10px" width="16" height="15" viewBox="0 0 16 15"><path d="M12 3.500c-.8-1.800-2.300-2.500-4-2.500-2 0-3.800 1-3.800 2.800 0 1.700 1.500 2.400 3.800 2.900M4 11c.7 1.900 2.300 2.800 4.200 2.800 2.200 0 3.800-1.100 3.800-2.900 0-1-.5-1.700-1.300-2.200M0.500 7.200h15" stroke="#111" stroke-width="1.400" fill="none"/></svg></div><div class="bx " style="left:1846px;top:466.25px;width:35.5px;height:35.5px"><svg style="left:8px;top:9px" width="18" height="17" viewBox="0 0 18 17"><g stroke="#111" stroke-width="1.200" fill="none"><path d="M3.500 0.500v14M0.500 11.500l3 3 3-3"/><path d="M9 9l2.800-8 2.800 8M10 6.500h3.600"/><path d="M11.800 10.500v6M10 12l1.800-1.800 1.800 1.800M10 15l1.800 1.800 1.800-1.800"/></g></svg></div><div class="bx" style="left:1674px;top:519px;width:233.500px;height:33.500px;text-align:center;font-size:14px;line-height:32px;color:#222">使用风格样式</div><div class="h" style="top:576px">分支</div><div class="lb" style="left:1674.5px;top:615.5px">布局</div><div class="bx " style="left:1711px;top:609.5px;width:74.5px;height:28px"><svg style="left:17px;top:2px" width="30" height="24" viewBox="0 0 30 24"><defs><linearGradient id="tg" x1="0" y1="0" x2="0" y2="1"><stop offset="0" stop-color="#0fb27f"/><stop offset="1" stop-color="#8fe8d0"/></linearGradient></defs><rect x="0.500" y="0.500" width="28" height="8" fill="url(#tg)"/><path d="M0.500 8.500h28v14.500h-28z M0.500 13h28 M0.500 17.500h28 M14.500 13v10" stroke="#9a9a9a" stroke-width="1" fill="none"/></svg></div><svg style="left:1772px;top:621.5px" width="9" height="6" viewBox="0 0 9 6"><path d="M1 1l3.500 3.500L8 1" fill="none" stroke="#111" stroke-width="1.700"/></svg><div class="lb" style="left:1802.5px;top:615.5px">方向</div><div class="bx " style="left:1839px;top:609.5px;width:74.5px;height:28px"><svg style="left:23px;top:6px" width="18" height="16" viewBox="0 0 18 16"><rect x="0.500" y="5" width="9" height="6" fill="#6b7cff"/><path d="M9.500 8h3M16 1c-4 0-5 3-5 7s1 7 5 7" stroke="#b9b9b9" stroke-width="1.200" fill="none"/></svg></div><svg style="left:1900px;top:621.5px" width="9" height="6" viewBox="0 0 9 6"><path d="M1 1l3.500 3.500L8 1" fill="none" stroke="#111" stroke-width="1.700"/></svg><div class="lb" style="left:1674.5px;top:655.5px">连线</div><div class="bx " style="left:1711px;top:649.5px;width:74.5px;height:28px"><svg style="left:24px;top:6px" width="18" height="16" viewBox="0 0 18 16"><path d="M16.500 1L1 8l15.500 7" stroke="#b9b9b9" stroke-width="1.200" fill="none"/><path d="M1 8h15.500" stroke="#8fb0ff" stroke-width="1.200"/></svg></div><svg style="left:1772px;top:661.5px" width="9" height="6" viewBox="0 0 9 6"><path d="M1 1l3.500 3.500L8 1" fill="none" stroke="#111" stroke-width="1.700"/></svg><div class="lb" style="left:1802.5px;top:655.5px">颜色</div><div class="bx " style="left:1839px;top:649.5px;width:74.5px;height:28px"><div class="a" style="left:10.500px;top:4px;width:28px;height:18px;border-radius:3px;background:#7cb342"></div></div><svg style="left:1900px;top:661.5px" width="9" height="6" viewBox="0 0 9 6"><path d="M1 1l3.500 3.500L8 1" fill="none" stroke="#111" stroke-width="1.700"/></svg><div class="lb" style="left:1674.5px;top:695.5px">线型</div><div class="bx " style="left:1711px;top:689.5px;width:74.5px;height:28px"><div class="a" style="left:6px;top:12px;width:51px;height:2px;background:#111"></div></div><svg style="left:1772px;top:701.5px" width="9" height="6" viewBox="0 0 9 6"><path d="M1 1l3.500 3.500L8 1" fill="none" stroke="#111" stroke-width="1.700"/></svg><div class="lb" style="left:1802.5px;top:695.5px">线宽</div><div class="bx " style="left:1839px;top:689.5px;width:74.5px;height:28px"><span class="pm" style="left:2px">−</span><span class="num" style="left:-2px">2</span><span class="pm" style="right:4px">+</span></div><div class="lb" style="left:1674.5px;top:735.5px">首端</div><div class="bx " style="left:1711px;top:729.5px;width:74.5px;height:28px"><div class="a" style="left:6px;top:12px;width:51px;height:2px;background:#111"></div></div><svg style="left:1772px;top:741.5px" width="9" height="6" viewBox="0 0 9 6"><path d="M1 1l3.500 3.500L8 1" fill="none" stroke="#111" stroke-width="1.700"/></svg><div class="lb" style="left:1802.5px;top:735.5px">末端</div><div class="bx " style="left:1839px;top:729.5px;width:74.5px;height:28px"><div class="a" style="left:6px;top:12px;width:51px;height:2px;background:#111"></div></div><svg style="left:1900px;top:741.5px" width="9" height="6" viewBox="0 0 9 6"><path d="M1 1l3.500 3.500L8 1" fill="none" stroke="#111" stroke-width="1.700"/></svg><div class="a" style="left:1683px;top:777px;width:13px;height:13px;border:1px solid #767676;border-radius:2px;background:#fff"></div><div class="lb" style="left:1701px;top:775.5px">分支编号</div></body></html>
